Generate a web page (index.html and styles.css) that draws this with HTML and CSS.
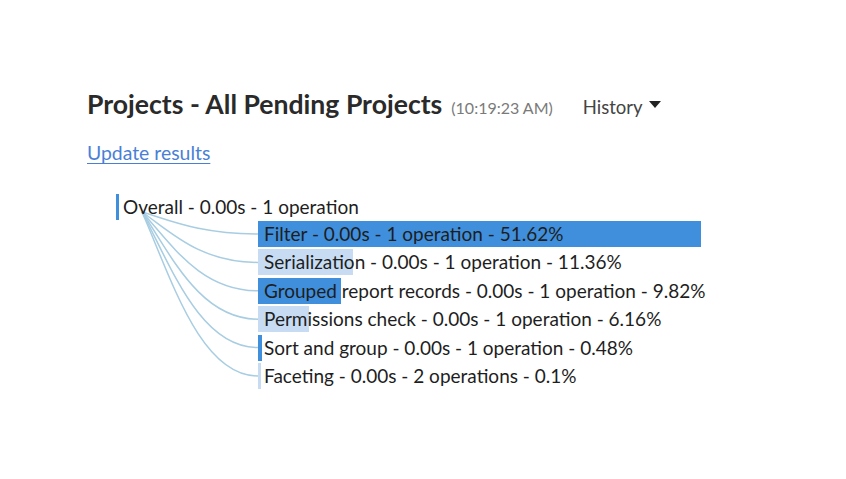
FILE: index.html
```html
<!DOCTYPE html>
<html lang="en">
<head>
<meta charset="utf-8">
<title>Projects - All Pending Projects</title>
<link rel="stylesheet" href="styles.css">
</head>
<body>
<div class="page">
  <div class="header">
    <h1 class="title">Projects - All Pending Projects</h1>
    <span class="time">(10:19:23 AM)</span>
    <span class="history">History <span class="caret"></span></span>
  </div>
  <a class="update" href="#">Update results</a>
  <div class="tree">
    <svg class="links" width="150" height="200" viewBox="0 0 150 200">
      <path d="M26 18 C55 26.8 84 40 142 40"/>
      <path d="M26 18 C55 38.2 84 68.4 142 68.4"/>
      <path d="M26 18 C55 49.5 84 96.8 142 96.8"/>
      <path d="M26 18 C55 60.9 84 125.2 142 125.2"/>
      <path d="M26 18 C55 72.2 84 153.6 142 153.6"/>
      <path d="M26 18 C55 83.6 84 182 142 182"/>
    </svg>
    <div class="node root"><span class="bar dark root-bar"></span><span class="label">Overall - 0.00s - 1 operation</span></div>
    <div class="children">
      <div class="node"><span class="bar dark" style="width:443px"></span><span class="label">Filter - 0.00s - 1 operation - 51.62%</span></div>
      <div class="node"><span class="bar light" style="width:95px"></span><span class="label">Serialization - 0.00s - 1 operation - 11.36%</span></div>
      <div class="node"><span class="bar dark" style="width:83px"></span><span class="label">Grouped report records - 0.00s - 1 operation - 9.82%</span></div>
      <div class="node"><span class="bar light" style="width:51px"></span><span class="label">Permissions check - 0.00s - 1 operation - 6.16%</span></div>
      <div class="node"><span class="bar dark" style="width:4px"></span><span class="label">Sort and group - 0.00s - 1 operation - 0.48%</span></div>
      <div class="node"><span class="bar light" style="width:3px"></span><span class="label">Faceting - 0.00s - 2 operations - 0.1%</span></div>
    </div>
  </div>
</div>
</body>
</html>
```
FILE: styles.css
```css
html, body {
  margin: 0;
  padding: 0;
  background: #ffffff;
}
body {
  font-family: Lato, "Noto Sans", sans-serif;
  color: #1e1e1e;
}
.page {
  padding: 88px 0 0 87px;
}
.header {
  display: flex;
  align-items: baseline;
  height: 38px;
}
.title {
  margin: 0;
  font-size: 26.6px;
  font-weight: 700;
  color: #2a2a2a;
}
.time {
  margin-left: 9px;
  font-size: 16px;
  color: #7a7a7a;
}
.history {
  margin-left: 30px;
  font-size: 18.5px;
  color: #444444;
  display: inline-flex;
  align-items: center;
}
.caret {
  display: inline-block;
  width: 0;
  height: 0;
  margin-left: 6px;
  border-left: 6px solid transparent;
  border-right: 6px solid transparent;
  border-top: 7px solid #222222;
  position: relative;
  top: -3px;
}
.update {
  display: inline-block;
  margin-top: 15px;
  font-size: 19.4px;
  color: #4a7fd6;
  text-decoration: underline;
  text-underline-offset: 3px;
}
.tree {
  position: relative;
  margin: 30px 0 0 29px;
}
.links {
  position: absolute;
  left: 0;
  top: 0;
  fill: none;
  stroke: #a8cde2;
  stroke-width: 1.5;
}
.node {
  position: relative;
  height: 26px;
  line-height: 26px;
  font-size: 19px;
  white-space: nowrap;
}
.bar {
  position: absolute;
  left: 0;
  top: 0;
  height: 100%;
}
.bar.dark {
  background: #3f8fdc;
}
.bar.light {
  background: #c7dcf3;
}
.root-bar {
  width: 3px;
}
.label {
  position: relative;
  padding-left: 6px;
}
.root .label {
  padding-left: 7px;
}
.children {
  margin: 1px 0 0 142px;
  display: flex;
  flex-direction: column;
  gap: 2.4px;
}
```
